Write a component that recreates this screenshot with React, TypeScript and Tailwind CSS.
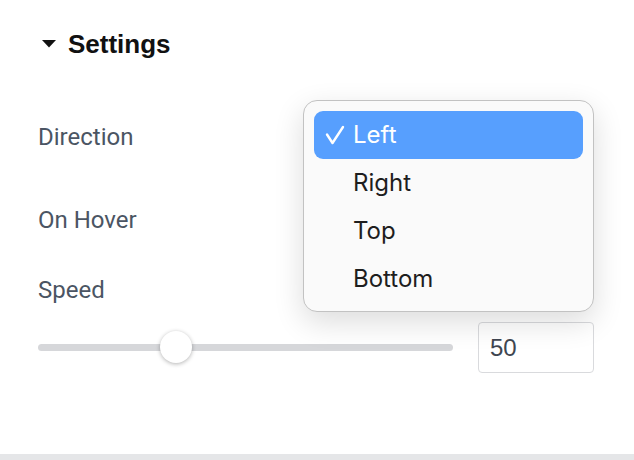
const items = ["Left", "Right", "Top", "Bottom"];

function App() {
  return (
    <div className="relative w-[634px] h-[460px] bg-white overflow-hidden flex flex-col">
      <div className="pl-[38px] pr-[40px] pt-[28px] font-['Roboto',sans-serif] text-[24px] text-[#4b5563]">
        <div className="flex items-center h-[32px]">
          <svg width="14" height="8" viewBox="0 0 14 8" className="ml-[4px]">
            <path d="M0 0 L14 0 L7 7.5 Z" fill="#111" />
          </svg>
          <span className="ml-[12px] font-['Liberation_Sans',sans-serif] font-bold text-[26px] text-[#111]">
            Settings
          </span>
        </div>

        <div className="mt-[53px] h-[48px] flex items-center">Direction</div>
        <div className="mt-[35px] h-[48px] flex items-center">On Hover</div>
        <div className="mt-[34px] h-[24px] flex items-center">Speed</div>

        <div className="mt-[20px] flex items-center gap-[25px]">
          <div className="relative flex-1 h-[7px] rounded-full bg-[#d6d7da]">
            <div className="absolute left-[122px] top-[-13px] w-[32px] h-[32px] rounded-full bg-white shadow-[0_1px_4px_rgba(0,0,0,0.3)]" />
          </div>
          <div className="w-[116px] h-[51px] rounded-[4px] border border-[#d9dadd] flex items-center px-[11px] font-['Liberation_Sans',sans-serif] text-[#3f4651]">
            50
          </div>
        </div>
      </div>

      <div className="mt-auto h-[6px] bg-[#e5e6e8]" />

      <div className="absolute left-[303px] top-[100px] w-[291px] h-[212px] rounded-[14px] border border-[#c2c2c2] bg-[#fafafa] shadow-[0_10px_30px_rgba(0,0,0,0.14)] p-[10px] font-['Inter',sans-serif] text-[24px] text-[#1e1e1e]">
        {items.map((item, i) => (
          <div
            key={item}
            className={
              i === 0
                ? "h-[48px] flex items-center rounded-[9px] bg-[#579ffe] text-white"
                : "h-[48px] flex items-center"
            }
          >
            <span className="w-[39px] flex justify-end pr-[8px]">
              {i === 0 && (
                <svg width="20" height="20" viewBox="0 0 20 20">
                  <path d="M2 9.5 L7.5 18 L18 2" fill="none" stroke="white" strokeWidth="2.4" strokeLinecap="round" strokeLinejoin="round" />
                </svg>
              )}
            </span>
            <span className="leading-none">{item}</span>
          </div>
        ))}
      </div>
    </div>
  );
}

export default App;
